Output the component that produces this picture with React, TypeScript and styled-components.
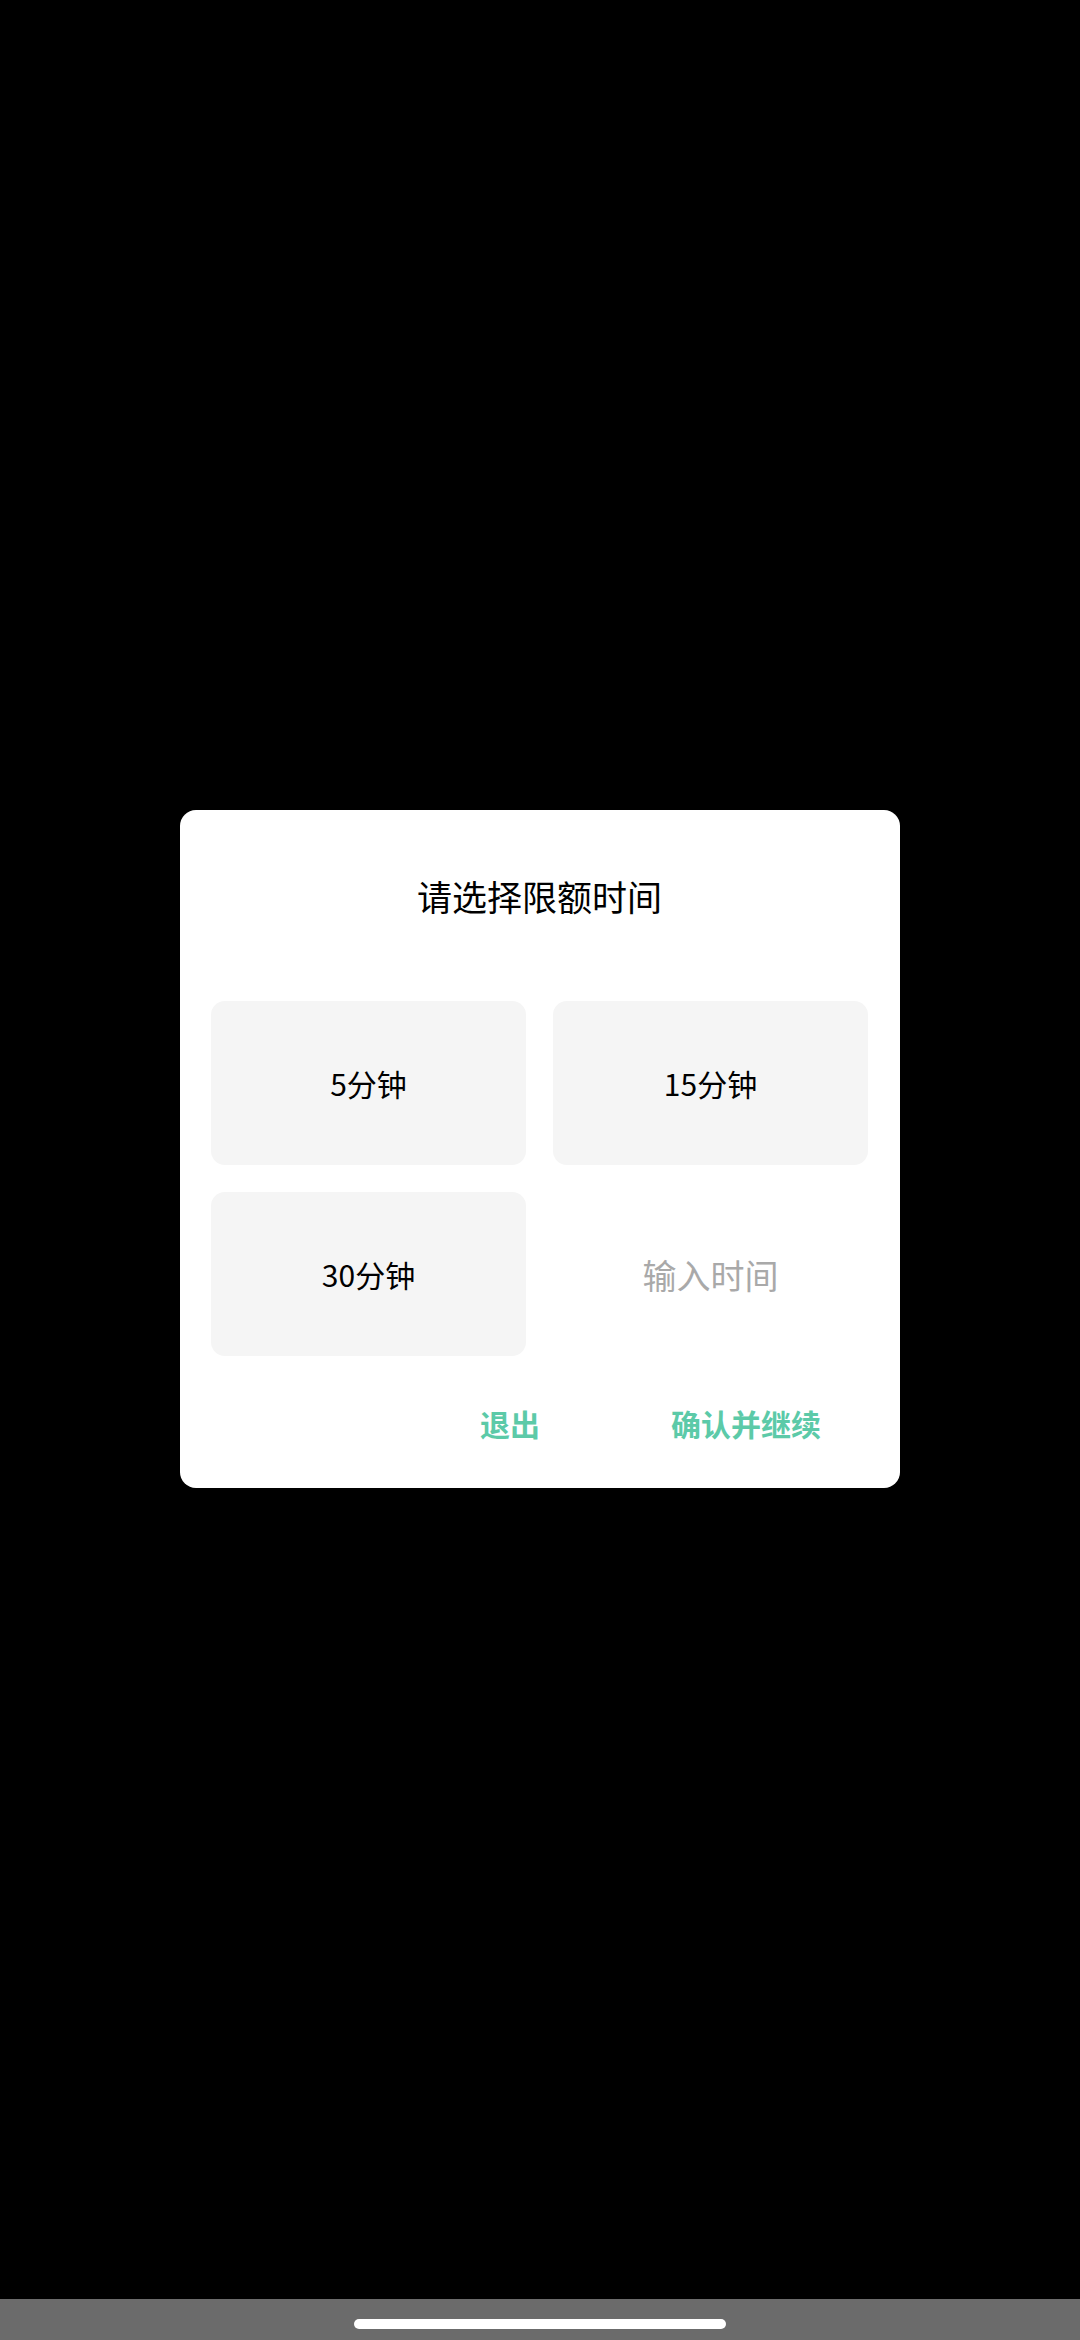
import styled, { createGlobalStyle } from 'styled-components';

const GlobalStyle = createGlobalStyle`
  html, body {
    margin: 0;
    padding: 0;
    background: #000;
  }
  #root {
    height: 2340px;
  }
`;

const options = ['5分钟', '15分钟', '30分钟'];

const App = () => {
  return (
    <>
      <GlobalStyle />
      <Screen>
        <Backdrop>
          <Dialog>
            <Title>请选择限额时间</Title>
            <OptionGrid>
              {options.map((label) => (
                <OptionCard key={label}>{label}</OptionCard>
              ))}
              <TimeInput placeholder="输入时间" />
            </OptionGrid>
            <Actions>
              <ActionButton>退出</ActionButton>
              <ActionButton>确认并继续</ActionButton>
            </Actions>
          </Dialog>
        </Backdrop>
        <NavBar>
          <HomeIndicator />
        </NavBar>
      </Screen>
    </>
  );
};

export default App;

// region STYLES

const Screen = styled.div`
  width: 1080px;
  height: 2340px;
  display: flex;
  flex-direction: column;
  background: #000;
  font-family: 'Noto Sans CJK SC', 'Noto Sans', sans-serif;
`;

const Backdrop = styled.div`
  flex: 1;
  display: flex;
  justify-content: center;
  padding-top: 810px;
`;

const Dialog = styled.div`
  width: 720px;
  height: 678px;
  box-sizing: border-box;
  background: #fff;
  border-radius: 16px;
  padding: 0 32px 0 31px;
  display: flex;
  flex-direction: column;
`;

const Title = styled.div`
  margin-top: 60px;
  height: 52px;
  line-height: 52px;
  text-align: center;
  font-size: 35px;
  color: #000;
`;

const OptionGrid = styled.div`
  margin-top: 79px;
  display: grid;
  grid-template-columns: 1fr 1fr;
  grid-auto-rows: 164px;
  column-gap: 27px;
  row-gap: 27px;
`;

const OptionCard = styled.div`
  background: #f5f5f5;
  border-radius: 14px;
  display: flex;
  align-items: center;
  justify-content: center;
  font-size: 30px;
  color: #000;
`;

const TimeInput = styled.input`
  border: none;
  outline: none;
  background: transparent;
  text-align: center;
  font-family: 'Noto Sans CJK SC', 'Noto Sans', sans-serif;
  font-size: 34px;
  color: #000;
  padding: 0;
  width: 100%;

  &::placeholder {
    color: #a9a9a9;
  }
`;

const Actions = styled.div`
  margin-top: 42px;
  display: flex;
  justify-content: flex-end;
  gap: 83px;
  padding-right: 23px;
`;

const ActionButton = styled.button`
  border: none;
  background: transparent;
  padding: 0 24px;
  height: 50px;
  font-family: 'Noto Sans CJK SC', 'Noto Sans', sans-serif;
  font-size: 30px;
  font-weight: 700;
  color: #5ccaa8;
`;

const NavBar = styled.div`
  height: 41px;
  background: #6b6b6b;
  display: flex;
  justify-content: center;
  padding-top: 20px;
  box-sizing: border-box;
`;

const HomeIndicator = styled.div`
  width: 372px;
  height: 10px;
  border-radius: 5px;
  background: #fff;
`;

// endregion
